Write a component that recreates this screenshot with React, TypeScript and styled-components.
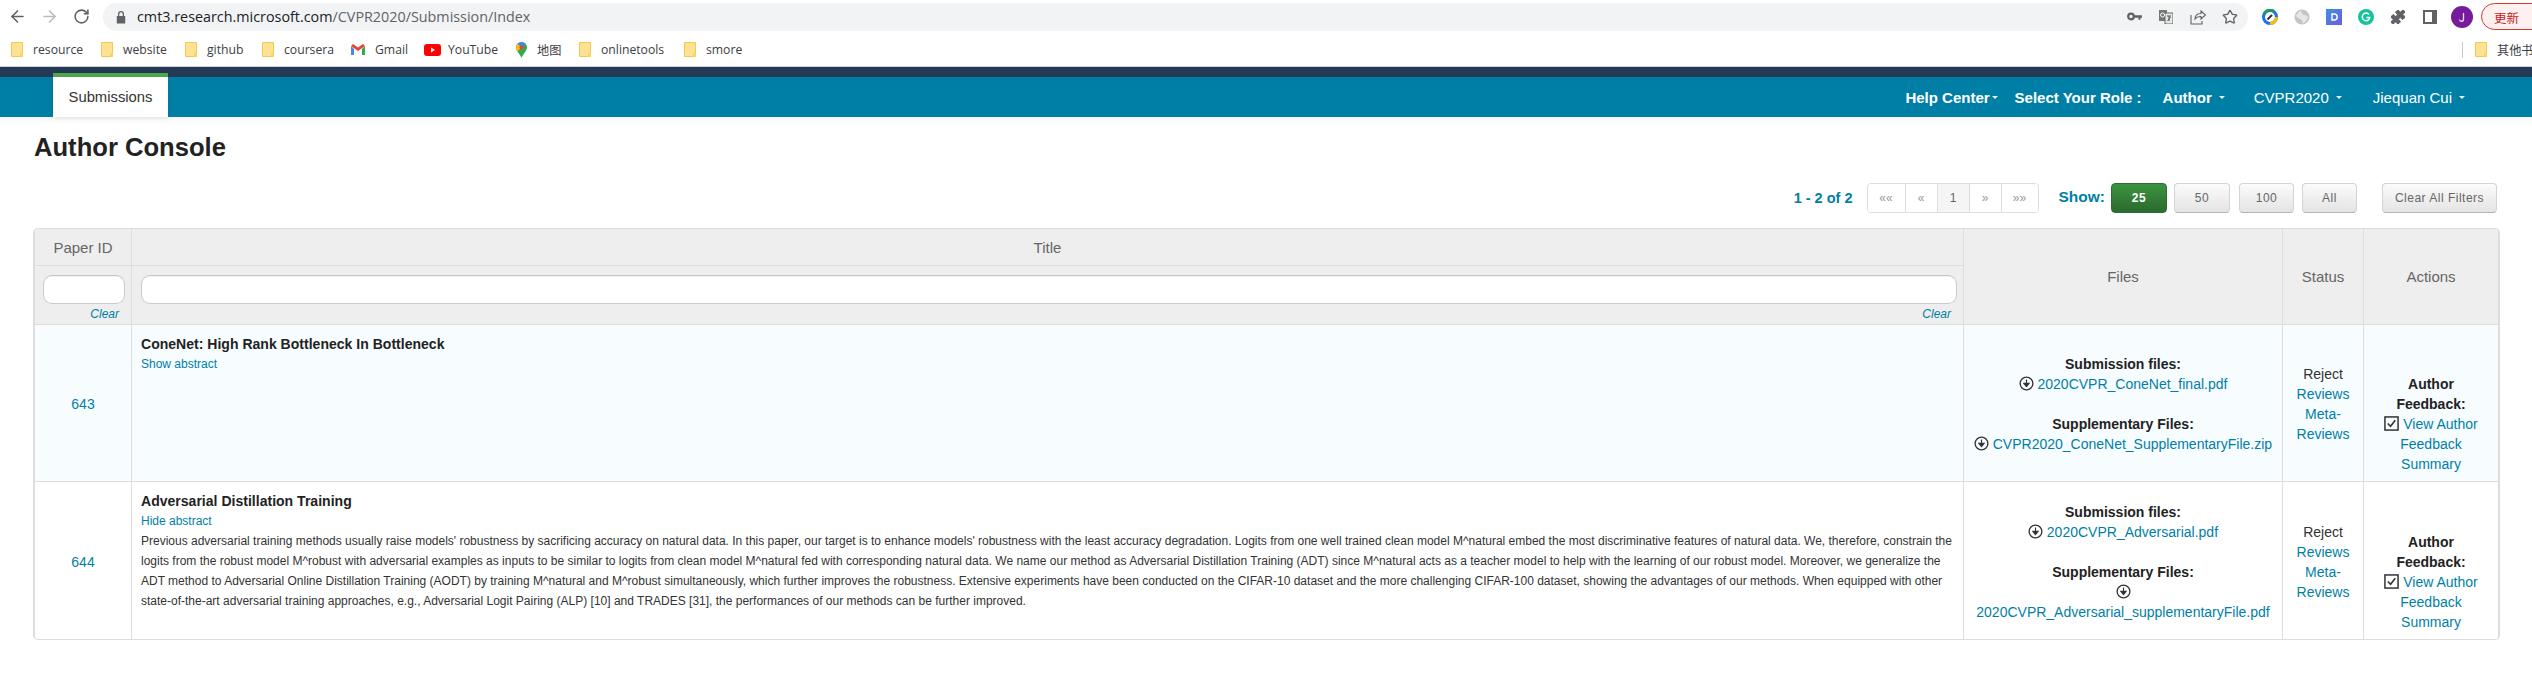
import React from "react";
import styled, { createGlobalStyle } from "styled-components";
import { ArrowLeft, ArrowRight, RotateCw, Star, Puzzle } from "lucide-react";

const Global = createGlobalStyle`
  html, body { margin: 0; padding: 0; background: #fff; }
  body { font-family: "Liberation Sans", Arial, sans-serif; font-size: 14px; color: #333; overflow: hidden; }
  #root { width: 2532px; height: 676px; overflow: hidden; }
`;

const Toolbar = styled.div`
  display: flex; align-items: center; height: 33px; padding-left: 1px; overflow: hidden;
`;
const ToolIcon = styled.span<{ $dim?: boolean }>`
  flex: none; width: 32px; height: 32px; display: flex; align-items: center; justify-content: center;
  color: ${(p) => (p.$dim ? "#b8babd" : "#5f6368")};
`;
const UrlPill = styled.div`
  flex: none; width: 2145px; height: 28px; margin: 0 6px; border-radius: 14px; background: #f1f3f4;
  display: flex; align-items: center; padding: 0 2px 0 12px; box-sizing: border-box;
`;
const UrlText = styled.span`
  font-family: "Open Sans", sans-serif; font-size: 14.35px; color: #5f6368; margin-left: 10px; flex: 1; white-space: nowrap;
  b { font-weight: 400; color: #202124; }
`;
const UpdateButton = styled.div`
  flex: none; width: 70px; height: 27px; margin-left: 3px; border: 1px solid #d33b2c; border-radius: 14px;
  background: #fdf0ee; color: #c5221f; font-family: "Noto Sans CJK SC", sans-serif; font-size: 12.5px;
  line-height: 27px; padding-left: 12px; box-sizing: border-box;
`;
const BookmarkBar = styled.div`
  display: flex; align-items: center; height: 33px; padding-left: 11px; border-bottom: 1px solid #cfd0d2; overflow: hidden;
`;
const Bookmark = styled.div<{ $w: number; $gap?: number }>`
  flex: none; width: ${(p) => p.$w}px; display: flex; align-items: center; gap: ${(p) => p.$gap ?? 10}px;
  font-family: "Open Sans", "Noto Sans CJK SC", sans-serif; font-size: 12.2px; color: #3c4043; white-space: nowrap;
  svg { flex: none; }
`;
const OtherBookmarks = styled(Bookmark)`
  margin-left: auto; border-left: 1px solid #c8c9cb; padding-left: 12px; height: 16px; box-sizing: border-box;
`;

const Nav = styled.nav`
  display: flex; justify-content: space-between; height: 40px; background: #007fa6; border-top: 10px solid #253a56;
`;
const Tab = styled.div`
  margin: -4px 0 0 53px; width: 115px; background: #fff; border-top: 4px solid #4ca64c; box-sizing: border-box; height: 44px;
  display: flex; align-items: center; justify-content: center; color: #333; font-size: 14.8px; box-shadow: 0 0 6px rgba(0,0,0,.12);
`;
const NavMenu = styled.div`
  display: flex; align-items: center; padding-right: 67px; color: #fff; font-size: 15px;
`;
const NavItem = styled.span<{ $bold?: boolean; $ml: number }>`
  margin-left: ${(p) => p.$ml}px; font-weight: ${(p) => (p.$bold ? 700 : 400)}; white-space: nowrap;
  display: flex; align-items: center;
`;
const Caret = styled.i<{ $ml: number }>`
  display: inline-block; margin-left: ${(p) => p.$ml}px; width: 0; height: 0;
  border-left: 3.5px solid transparent; border-right: 3.5px solid transparent; border-top: 3.5px solid #e6f2f6;
`;

const Page = styled.main`
  padding: 15px 32px 0 33px; box-shadow: inset 0 8px 8px -8px rgba(0,0,0,.08);
`;
const Heading = styled.h1`
  margin: 0 0 0 1px; font-size: 25.6px; line-height: 31px; font-weight: 700; color: #222;
`;
const ControlBar = styled.div`
  display: flex; justify-content: flex-end; align-items: center; margin: 20px 3px 15px 0; height: 30px;
`;
const CountLabel = styled.span`
  color: #007fa6; font-weight: 700; font-size: 14.5px; margin-right: 14px;
`;
const Pager = styled.div`
  display: flex; height: 30px; box-sizing: border-box; border: 1px solid #ddd; border-radius: 4px; overflow: hidden; margin-right: 20px;
`;
const PagerCell = styled.span<{ $w: number; $current?: boolean }>`
  width: ${(p) => p.$w}px; box-sizing: border-box; display: flex; align-items: center; justify-content: center; font-size: 12px;
  color: ${(p) => (p.$current ? "#666" : "#999")}; background: ${(p) => (p.$current ? "#f5f5f5" : "#fff")};
  & + & { border-left: 1px solid #ddd; }
`;
const ShowLabel = styled.span`
  color: #007fa6; font-weight: 700; font-size: 15.5px; margin-right: 6px; position: relative; top: -1px;
`;
const Btn = styled.button<{ $w: number; $active?: boolean; $ml?: number }>`
  width: ${(p) => p.$w}px; height: 30px; margin-left: ${(p) => p.$ml ?? 8}px; padding: 0; border-radius: 4px;
  font: ${(p) => (p.$active ? 700 : 400)} 12px "Liberation Sans", sans-serif; letter-spacing: .5px;
  color: ${(p) => (p.$active ? "#fff" : "#666")};
  border: 1px solid ${(p) => (p.$active ? "#2c6e2f" : "#d4d4d4")};
  border-bottom-color: ${(p) => (p.$active ? "#2c6e2f" : "#b5b5b5")};
  background: ${(p) => (p.$active ? "linear-gradient(#3c933f,#2b6a2f)" : "linear-gradient(#fbfbfb,#e4e4e4)")};
`;

const Table = styled.table`
  width: 2467px; table-layout: fixed; border-collapse: separate; border-spacing: 0;
  border: 1px solid #ddd; border-width: 1px 2px 1px 2px; border-radius: 5px; overflow: hidden; box-sizing: border-box;
`;
const Head = styled.th`
  height: 36px; padding: 0; background: #eee; font-weight: 400; font-size: 15px; color: #666;
  text-align: center; vertical-align: middle; border-left: 1px solid #ddd; border-bottom: 1px solid #ddd;
  &:first-child { border-left: 0; }
`;
const FilterCell = styled.th`
  height: 59px; padding: 9px 6px 0 9px; background: #eee; font-weight: 400; vertical-align: top;
  border-left: 1px solid #ddd; border-bottom: 1px solid #ddd; box-sizing: border-box;
  &:first-child { border-left: 0; padding-left: 8px; }
`;
const FilterInput = styled.input`
  display: block; width: 100%; height: 29px; box-sizing: border-box; border: 1px solid #ccc; border-top-color: #c4c4c4;
  border-radius: 9px; background: #fff; box-shadow: inset 0 1px 1px rgba(0,0,0,.06); outline: 0;
`;
const ClearLink = styled.a`
  display: block; text-align: right; font-size: 12px; font-style: italic; line-height: 14px; margin-top: 3px; padding-right: 6px; color: #007fa6;
`;
const Row = styled.tr<{ $tint?: boolean }>`
  background: ${(p) => (p.$tint ? "#f7fcff" : "#fff")};
`;
const Cell = styled.td<{ $center?: boolean; $pad?: number }>`
  height: 157px; box-sizing: border-box; padding: 2px ${(p) => p.$pad ?? 8}px 0; line-height: 20px; vertical-align: middle;
  text-align: ${(p) => (p.$center ? "center" : "left")}; border-left: 1px solid #ddd; border-bottom: 1px solid #ddd;
  tr:last-child > & { border-bottom: 0; }
  &:first-child { border-left: 0; }
`;
const TitleCell = styled(Cell)`
  vertical-align: top; padding: 9px 8px 0 9px;
`;
const PaperTitle = styled.div`
  font-size: 14px; font-weight: 700; color: #222; letter-spacing: .02px;
`;
const SmallLink = styled.a`
  display: block; font-size: 12px; color: #007fa6;
`;
const Abstract = styled.div`
  font-size: 12px; color: #333;
`;
const Link = styled.a`
  color: #007fa6;
`;
const FileLabel = styled.strong`
  display: block; color: #222;
`;
const Spacer = styled.div`
  height: 20px;
`;
const ActionBlock = styled.div`
  padding-top: 40px;
`;
const InlineIcon = styled.svg`
  width: 15px; height: 15px; vertical-align: -2px; color: #333;
`;
const Block = styled.div``;

const Folder = () => (
  <svg width="12" height="15" viewBox="0 0 12 15">
    <path d="M.5.5h11v14H.5z" fill="#fde293" stroke="#f2c94c" />
    <rect x="9" y="11" width="3" height="4" fill="#f9d560" />
  </svg>
);
const CircleDown = () => (
  <InlineIcon viewBox="0 0 16 16">
    <circle cx="8" cy="8" r="6.8" fill="none" stroke="currentColor" strokeWidth="1.4" />
    <path d="M8 3.8v6.6M5.2 7.8 8 11.4l2.8-3.6z" fill="currentColor" stroke="currentColor" strokeWidth="1.2" />
  </InlineIcon>
);
const CheckSquare = () => (
  <InlineIcon viewBox="0 0 16 16">
    <rect x="1" y="1" width="14" height="14" fill="none" stroke="currentColor" strokeWidth="1.6" />
    <path d="M4 8l3 3 5-6.5" fill="none" stroke="currentColor" strokeWidth="1.7" />
  </InlineIcon>
);

const abstract =
  "Previous adversarial training methods usually raise models' robustness by sacrificing accuracy on natural data. In this paper, our target is to enhance models' robustness with the least accuracy degradation. Logits from one well trained clean model M^natural embed the most discriminative features of natural data. We, therefore, constrain the logits from the robust model M^robust with adversarial examples as inputs to be similar to logits from clean model M^natural fed with corresponding natural data. We name our method as Adversarial Distillation Training (ADT) since M^natural acts as a teacher model to help with the learning of our robust model. Moreover, we generalize the ADT method to Adversarial Online Distillation Training (AODT) by training M^natural and M^robust simultaneously, which further improves the robustness. Extensive experiments have been conducted on the CIFAR-10 dataset and the more challenging CIFAR-100 dataset, showing the advantages of our methods. When equipped with other state-of-the-art adversarial training approaches, e.g., Adversarial Logit Pairing (ALP) [10] and TRADES [31], the performances of our methods can be further improved.";

const StatusCell = () => (
  <Cell $center>
    Reject
    <br />
    <Link>Reviews</Link>
    <br />
    <Link>Meta-Reviews</Link>
  </Cell>
);
const ActionsCell = () => (
  <Cell $center $pad={14}>
    <ActionBlock>
      <FileLabel>Author Feedback:</FileLabel>
      <CheckSquare /> <Link>View Author Feedback Summary</Link>
    </ActionBlock>
  </Cell>
);

const Files = ({ a, b }: { a: string; b: string }) => (
  <Cell $center>
    <FileLabel>Submission files:</FileLabel>
    <Block>
      <CircleDown /> <Link>{a}</Link>
    </Block>
    <Spacer />
    <FileLabel>Supplementary Files:</FileLabel>
    <Block>
      <CircleDown /> <Link>{b}</Link>
    </Block>
  </Cell>
);

export default function App() {
  return (
    <>
      <Global />
      <Toolbar>
        <ToolIcon><ArrowLeft size={19} strokeWidth={2} /></ToolIcon>
        <ToolIcon $dim><ArrowRight size={19} strokeWidth={2} /></ToolIcon>
        <ToolIcon><RotateCw size={17} strokeWidth={2.2} /></ToolIcon>
        <UrlPill>
          <svg width="12" height="14" viewBox="0 0 12 14">
            <path d="M3 6V4a3 3 0 0 1 6 0v2h1.2v7.5H1.8V6zm1.3 0h3.4V4a1.7 1.7 0 0 0-3.4 0z" fill="#5f6368" />
          </svg>
          <UrlText><b>cmt3.research.microsoft.com</b>/CVPR2020/Submission/Index</UrlText>
          <ToolIcon>
            <svg width="15" height="9" viewBox="0 0 15 9">
              <circle cx="4" cy="4.5" r="2.8" fill="none" stroke="#5f6368" strokeWidth="2.2" />
              <path d="M7 3.3h8v2.5h-1.5v2h-2v-2H7z" fill="#5f6368" />
            </svg>
          </ToolIcon>
          <ToolIcon>
            <svg width="14" height="14" viewBox="0 0 14 14">
              <path d="M0 0h8v11H0z" fill="#777" />
              <path d="M6 3h8v11H6z" fill="#e8e8e8" stroke="#666" />
              <circle cx="3.6" cy="5" r="2" fill="none" stroke="#fff" />
              <path d="M8 6h4M10 6v5M8.5 11l3-4" stroke="#555" fill="none" />
            </svg>
          </ToolIcon>
          <ToolIcon>
            <svg width="16" height="16" viewBox="0 0 16 16" fill="none" stroke="#5f6368" strokeWidth="1.1">
              <path d="M1 6v9h11v-3M5 10c0-4 3-5.500 6-5.500V2l4.500 4-4.500 4V7.500C8 7.500 6 8.500 5 10z" />
            </svg>
          </ToolIcon>
          <ToolIcon><Star size={16} strokeWidth={2} /></ToolIcon>
        </UrlPill>
        <ToolIcon>
          <svg width="16" height="16" viewBox="0 0 16 16">
            <circle cx="8" cy="8" r="6.500" fill="#fff" stroke="#1a73e8" strokeWidth="3" />
            <path d="M2 5A6.500 6.500 0 0 1 12 2.500" fill="none" stroke="#1e9e5a" strokeWidth="3" />
            <path d="M14.500 8A6.500 6.500 0 0 1 8 14.500" fill="none" stroke="#fbbc04" strokeWidth="3" />
            <path d="M5.500 10.500 10 6" stroke="#333" strokeWidth="2" />
          </svg>
        </ToolIcon>
        <ToolIcon>
          <svg width="16" height="16" viewBox="0 0 16 16">
            <circle cx="8" cy="8" r="7.500" fill="#c4c4c4" />
            <path d="M6 1.500c3 1 1 3 3 4s4 0 5 3c-1 3-3 5-5 6-1-2 0-3-2-4S2 8 2 6z" fill="#e6e6e6" />
          </svg>
        </ToolIcon>
        <ToolIcon>
          <svg width="16" height="16" viewBox="0 0 16 16">
            <defs>
              <linearGradient id="dg" x1="0" y1="0" x2="1" y2="1">
                <stop offset="0" stopColor="#3f8ee0" />
                <stop offset="1" stopColor="#6b5fe0" />
              </linearGradient>
            </defs>
            <rect width="16" height="16" fill="url(#dg)" />
            <path d="M6 5h2.200a3 3 0 0 1 0 6H6z" fill="none" stroke="#fff" strokeWidth="1.400" />
          </svg>
        </ToolIcon>
        <ToolIcon>
          <svg width="16" height="16" viewBox="0 0 16 16">
            <circle cx="8" cy="8" r="8" fill="#15c39a" />
            <path d="M11 5.500A3.800 3.800 0 1 0 11.800 8.500H8.500" fill="none" stroke="#fff" strokeWidth="1.500" />
          </svg>
        </ToolIcon>
        <ToolIcon><Puzzle size={16} fill="#5f6368" strokeWidth={1.500} /></ToolIcon>
        <ToolIcon>
          <svg width="14" height="14" viewBox="0 0 14 14">
            <path d="M1 1h12v12H1z" fill="#fff" stroke="#5f6368" strokeWidth="2" />
            <rect x="9" y="1" width="4" height="12" fill="#5f6368" />
          </svg>
        </ToolIcon>
        <ToolIcon>
          <svg width="22" height="22" viewBox="0 0 22 22">
            <circle cx="11" cy="11" r="11" fill="#761b9c" />
            <path d="M12.500 7v6a2 2 0 0 1-4 .5" fill="none" stroke="#e8d6f0" strokeWidth="1.300" />
          </svg>
        </ToolIcon>
        <UpdateButton>更新</UpdateButton>
      </Toolbar>

      <BookmarkBar>
        <Bookmark $w={90}><Folder />resource</Bookmark>
        <Bookmark $w={84}><Folder />website</Bookmark>
        <Bookmark $w={77}><Folder />github</Bookmark>
        <Bookmark $w={89}><Folder />coursera</Bookmark>
        <Bookmark $w={73}>
          <svg width="14" height="11" viewBox="0 0 14 11">
            <path d="M0 2v9h3V5z" fill="#4285f4" />
            <path d="M14 2v9h-3V5z" fill="#34a853" />
            <path d="M0 2 7 7l7-5-2-2-5 3.500L2 0z" fill="#ea4335" />
          </svg>
          Gmail
        </Bookmark>
        <Bookmark $w={92} $gap={7}>
          <svg width="17" height="12" viewBox="0 0 17 12">
            <rect width="17" height="12" rx="3" fill="#f00" />
            <path d="M7 3.500v5l4-2.500z" fill="#fff" />
          </svg>
          YouTube
        </Bookmark>
        <Bookmark $w={63}>
          <svg width="11" height="16" viewBox="0 0 11 16">
            <path d="M5.500 0A5.500 5.500 0 0 0 0 5.500C0 9 4 12 5.500 16 7 12 11 9 11 5.500A5.500 5.500 0 0 0 5.500 0z" fill="#34a853" />
            <path d="M1.500 1.800 5.500 5.500 9.500 1.800A5.500 5.500 0 0 0 1.500 1.800z" fill="#4285f4" />
            <path d="M0 5.500C0 7 .6 8 1.500 9.200L5.500 5.500 1.500 1.800A5.500 5.500 0 0 0 0 5.500z" fill="#fbbc04" />
            <circle cx="5.500" cy="5.500" r="2" fill="#ea4335" />
          </svg>
          地图
        </Bookmark>
        <Bookmark $w={105}><Folder />onlinetools</Bookmark>
        <Bookmark $w={80}><Folder />smore</Bookmark>
        <OtherBookmarks $w={70}><Folder />其他书</OtherBookmarks>
      </BookmarkBar>

      <Nav>
        <Tab>Submissions</Tab>
        <NavMenu>
          <NavItem $bold $ml={0}>Help Center<Caret $ml={2} /></NavItem>
          <NavItem $bold $ml={17}>Select Your Role :</NavItem>
          <NavItem $bold $ml={21}>Author<Caret $ml={7} /></NavItem>
          <NavItem $ml={29}>CVPR2020<Caret $ml={7} /></NavItem>
          <NavItem $ml={31}>Jiequan Cui<Caret $ml={7} /></NavItem>
        </NavMenu>
      </Nav>

      <Page>
        <Heading>Author Console</Heading>
        <ControlBar>
          <CountLabel>1 - 2 of 2</CountLabel>
          <Pager>
            <PagerCell $w={37}>««</PagerCell>
            <PagerCell $w={32}>«</PagerCell>
            <PagerCell $w={32} $current>1</PagerCell>
            <PagerCell $w={32}>»</PagerCell>
            <PagerCell $w={37}>»»</PagerCell>
          </Pager>
          <ShowLabel>Show:</ShowLabel>
          <Btn $w={56} $active $ml={0}>25</Btn>
          <Btn $w={56} $ml={7}>50</Btn>
          <Btn $w={55} $ml={9}>100</Btn>
          <Btn $w={55}>All</Btn>
          <Btn $w={115} $ml={25}>Clear All Filters</Btn>
        </ControlBar>

        <Table>
          <colgroup>
            <col style={{ width: 96 }} />
            <col style={{ width: 1832 }} />
            <col style={{ width: 319 }} />
            <col style={{ width: 81 }} />
            <col style={{ width: 135 }} />
          </colgroup>
          <thead>
            <tr>
              <Head>Paper ID</Head>
              <Head>Title</Head>
              <Head rowSpan={2}>Files</Head>
              <Head rowSpan={2}>Status</Head>
              <Head rowSpan={2}>Actions</Head>
            </tr>
            <tr>
              <FilterCell><FilterInput /><ClearLink>Clear</ClearLink></FilterCell>
              <FilterCell><FilterInput /><ClearLink>Clear</ClearLink></FilterCell>
            </tr>
          </thead>
          <tbody>
            <Row $tint>
              <Cell $center><Link>643</Link></Cell>
              <TitleCell>
                <PaperTitle>ConeNet: High Rank Bottleneck In Bottleneck</PaperTitle>
                <SmallLink>Show abstract</SmallLink>
              </TitleCell>
              <Files a="2020CVPR_ConeNet_final.pdf" b="CVPR2020_ConeNet_SupplementaryFile.zip" />
              <StatusCell />
              <ActionsCell />
            </Row>
            <Row>
              <Cell $center><Link>644</Link></Cell>
              <TitleCell>
                <PaperTitle>Adversarial Distillation Training</PaperTitle>
                <SmallLink>Hide abstract</SmallLink>
                <Abstract>{abstract}</Abstract>
              </TitleCell>
              <Files a="2020CVPR_Adversarial.pdf" b="2020CVPR_Adversarial_supplementaryFile.pdf" />
              <StatusCell />
              <ActionsCell />
            </Row>
          </tbody>
        </Table>
      </Page>
    </>
  );
}
